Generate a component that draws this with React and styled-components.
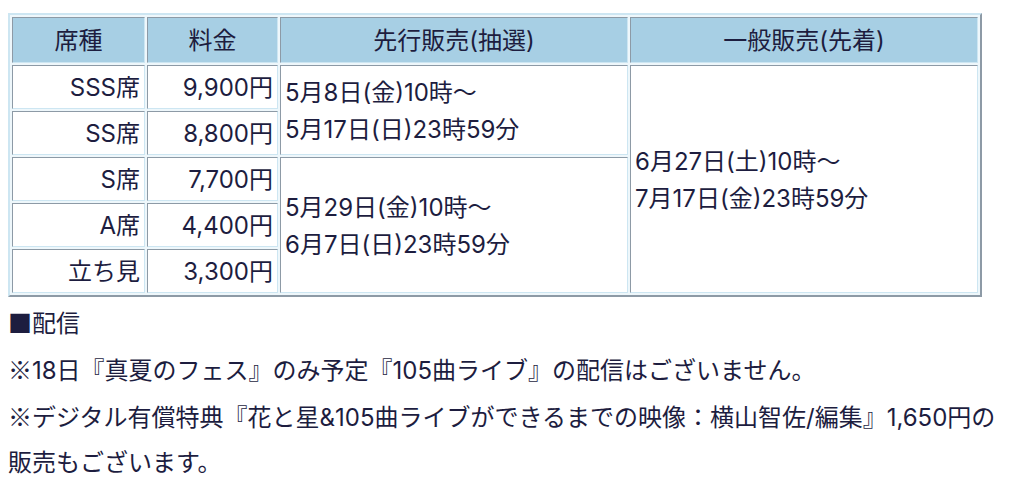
import React from "react";
import styled, { createGlobalStyle } from "styled-components";

const GlobalStyle = createGlobalStyle`
  body {
    margin: 8px;
    background: #ffffff;
    color: #1d1d3f;
    font-family: Inter, "Noto Sans CJK JP", sans-serif;
    font-size: 24px;
  }
`;

const PriceTable = styled.table`
  margin-top: 5px;
  border-collapse: separate;
  border-spacing: 2px;
  border-top: 2px solid #cde6f2;
  border-left: 2px solid #cde6f2;
  border-right: 2px solid #8d9aa6;
  border-bottom: 2px solid #8d9aa6;
  background: #eef7fb;
  table-layout: fixed;
`;

const Cell = styled.td`
  box-sizing: border-box;
  border-top: 1px solid #8d9aa6;
  border-left: 1px solid #8d9aa6;
  border-right: 1px solid #cde6f2;
  border-bottom: 1px solid #cde6f2;
  background: #ffffff;
  padding: 3px 4px 2px;
  line-height: 37px;
  text-align: ${(p) => p.$align || "left"};
  vertical-align: middle;
  white-space: nowrap;
`;

const HeadCell = styled(Cell).attrs({ as: "th" })`
  background: #a7cfe4;
  font-weight: normal;
  text-align: center;
  line-height: 39px;
`;

const Notes = styled.div`
  margin-top: 2px;
  line-height: 45px;
`;

const Line = styled.div``;

const Mark = styled.span`
  font-family: "Noto Sans CJK JP", sans-serif;
`;

const rows = [
  { seat: "SSS席", price: "9,900円" },
  { seat: "SS席", price: "8,800円" },
  { seat: "S席", price: "7,700円" },
  { seat: "A席", price: "4,400円" },
  { seat: "立ち見", price: "3,300円" },
];

function SaleDates({ from, to }) {
  return (
    <>
      {from}
      <br />
      {to}
    </>
  );
}

export default function App() {
  return (
    <>
      <GlobalStyle />
      <PriceTable>
        <colgroup>
          <col style={{ width: 133 }} />
          <col style={{ width: 131 }} />
          <col style={{ width: 348 }} />
          <col style={{ width: 348 }} />
        </colgroup>
        <thead>
          <tr>
            <HeadCell>席種</HeadCell>
            <HeadCell>料金</HeadCell>
            <HeadCell>先行販売(抽選)</HeadCell>
            <HeadCell>一般販売(先着)</HeadCell>
          </tr>
        </thead>
        <tbody>
          {rows.map((r, i) => (
            <tr key={r.seat}>
              <Cell $align="right">{r.seat}</Cell>
              <Cell $align="right">{r.price}</Cell>
              {i === 0 && (
                <Cell rowSpan={2}>
                  <SaleDates from="5月8日(金)10時～" to="5月17日(日)23時59分" />
                </Cell>
              )}
              {i === 0 && (
                <Cell rowSpan={5}>
                  <SaleDates from="6月27日(土)10時～" to="7月17日(金)23時59分" />
                </Cell>
              )}
              {i === 2 && (
                <Cell rowSpan={3}>
                  <SaleDates from="5月29日(金)10時～" to="6月7日(日)23時59分" />
                </Cell>
              )}
            </tr>
          ))}
        </tbody>
      </PriceTable>
      <Notes>
        <Line>
          <Mark>■</Mark>配信
        </Line>
        <Line>
          <Mark>※</Mark>18日『真夏のフェス』のみ予定『105曲ライブ』の配信はございません。
        </Line>
        <Line>
          <Mark>※</Mark>デジタル有償特典『花と星&amp;105曲ライブができるまでの映像：横山智佐/編集』1,650円の販売もございます。
        </Line>
      </Notes>
    </>
  );
}
